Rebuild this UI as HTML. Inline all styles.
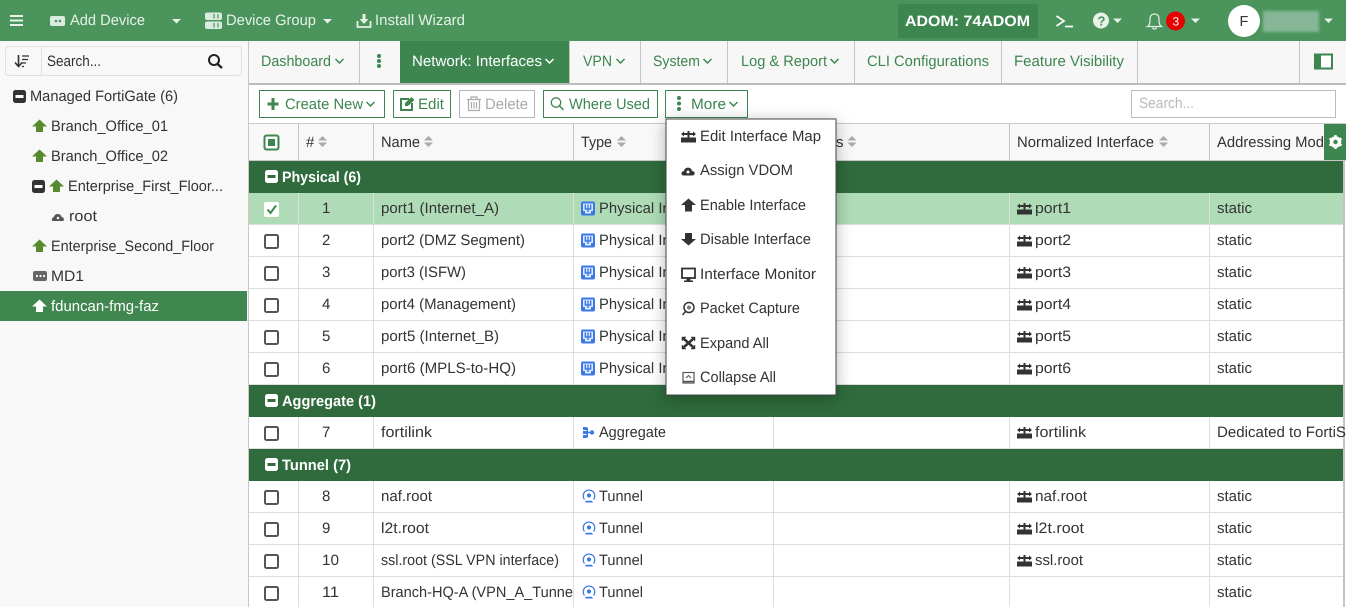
<!DOCTYPE html>
<html><head><meta charset="utf-8"><title>Network: Interfaces</title>
<style>
html,body{margin:0;padding:0;background:#fff;width:1346px;height:607px;overflow:hidden}
svg{display:block;position:absolute;left:0;top:0}
text{font-family:"Liberation Sans",sans-serif;font-size:15px;fill:#333;text-rendering:geometricPrecision}
.w{fill:#fff}.g{fill:#3d8650}.b{font-weight:bold}.m{fill:#4a4a4a}
.l{stroke:#dedede;stroke-width:1}
.h{stroke:#c4c4c4;stroke-width:1}
.c{fill:none;stroke-width:1.5}
</style></head><body>
<svg width="1346" height="607" viewBox="0 0 1346 607" xmlns="http://www.w3.org/2000/svg">
<defs>
<filter id="bl" x="-20%" y="-40%" width="140%" height="180%"><feGaussianBlur stdDeviation="1.2"/></filter>
<g id="up"><path d="M0 7L7.500 0L15 7H11V12.500H4V7Z" fill="#568a2c"/></g>
<g id="upw"><path d="M0 7L7.500 0L15 7H11V12.500H4V7Z" fill="#fff"/></g>
<g id="minus"><rect width="13" height="13" rx="2.500" fill="#333"/><rect x="2.500" y="5" width="8" height="3" fill="#fff"/></g>
<g id="gminus"><rect width="13" height="13" rx="2.500" fill="#fff"/><rect x="2.500" y="5" width="8" height="3" fill="#2f6b3c"/></g>
<g id="pm"><path d="M0 6.500H15V11.500H0Z" fill="#333"/><path d="M0 3L3 .5V2H6.500V0H8.500V2H12V.5L15 3L12 5.500V4H8.500V6.500H6.500V4H3V5.500Z" fill="#333"/></g>
<g id="sort"><path d="M0 4.500L4.500 0L9 4.500ZM0 6.500H9L4.500 11Z" fill="#aaa"/></g>
<g id="cb"><rect x="1" y="1" width="13" height="13" rx="1.500" fill="#fff" stroke="#555" stroke-width="2"/></g>
<g id="ph"><rect width="14" height="14" rx="2" fill="#3b78e7"/><path d="M2 2H12V9.500H10V12H4V9.500H2Z" fill="#dce8fb"/><path d="M4.300 3V7.500H9.700V3M7 3V10.500" fill="none" stroke="#3b78e7" stroke-width="1.400"/></g>
<g id="tu"><path d="M2 9.500A5.800 5.800 0 1 1 11 9.500" fill="none" stroke="#3b78e7" stroke-width="1.200"/><circle cx="6.500" cy="5.500" r="2.100" fill="#3b78e7"/><path d="M3.500 10.800H9.500L10.500 12.500H2.500Z" fill="#3b78e7"/></g>
<path id="dn" d="M0 0H9L4.500 4.500Z"/>
</defs>

<!-- top bar -->
<rect width="1346" height="41" fill="#4b955c"/>
<path d="M10 16H23M10 20.500H23M10 25H23" stroke="#e8f2ea" stroke-width="2"/>
<rect x="50" y="16" width="15" height="10" rx="2" fill="#dcebdf"/><circle cx="56" cy="21" r="1.300" fill="#4b955c"/><circle cx="60" cy="21" r="1.300" fill="#4b955c"/>
<text x="70" y="25" textLength="75" lengthAdjust="spacingAndGlyphs" style="fill:#e6f1e8">Add Device</text>
<use href="#dn" x="172" y="19" fill="#e6f1e8"/>
<rect x="205" y="12.500" width="17" height="7.500" rx="2" fill="#dcebdf"/><rect x="205" y="21.500" width="17" height="7.500" rx="2" fill="#dcebdf"/><path d="M214 14V18.500M218 14V18.500M214 23V27.500M218 23V27.500" stroke="#4b955c" stroke-width="1.200"/>
<text x="226" y="25" textLength="90" lengthAdjust="spacingAndGlyphs" style="fill:#e6f1e8">Device Group</text>
<use href="#dn" x="323" y="19" fill="#e6f1e8"/>
<path d="M362.500 14H365.500V19H368.500L364 24L359.500 19H362.500Z" fill="#e6f1e8"/><path d="M357.500 21V27H370.500V21" fill="none" stroke="#e6f1e8" stroke-width="1.800"/>
<text x="375" y="25" textLength="90" lengthAdjust="spacingAndGlyphs" style="fill:#e6f1e8">Install Wizard</text>
<rect x="898" y="4" width="140" height="34" fill="#3e8650"/>
<text x="905" y="26" textLength="125" lengthAdjust="spacingAndGlyphs" class="w b">ADOM: 74ADOM</text>
<path d="M1056.500 16L1064 21L1056.500 26M1065 26.500H1073" fill="none" stroke="#fff" stroke-width="1.700"/>
<circle cx="1101" cy="20.500" r="8" fill="#e8f2ea"/><text x="1097.500" y="25.500" class="b" style="font-size:13px;fill:#4b955c">?</text>
<use href="#dn" x="1113" y="18.500" fill="#e6f1e8"/>
<path d="M1147.500 26.500C1150 25 1150 22 1150 19C1150 15.500 1152 14 1154.500 14C1157 14 1159 15.500 1159 19C1159 22 1159 25 1161.500 26.500ZM1152.500 27.500C1153 29.500 1156 29.500 1156.500 27.500" fill="none" stroke="#e6f1e8" stroke-width="1.200"/>
<circle cx="1175.500" cy="21" r="9.500" fill="#e60000"/><text x="1172.500" y="25.500" class="w" style="font-size:12px">3</text>
<use href="#dn" x="1191" y="18.500" fill="#e6f1e8"/>
<circle cx="1244" cy="21" r="16" fill="#fff"/><text x="1239.500" y="26" style="font-size:14.500px">F</text>
<rect x="1263" y="11" width="56" height="21" fill="#86b695" filter="url(#bl)"/>
<use href="#dn" x="1324" y="18.500" fill="#e6f1e8"/>

<!-- sidebar -->
<rect y="41" width="248" height="566" fill="#f8f8f8"/>
<rect x="248" y="41" width="1" height="566" fill="#c9c9c9"/>
<rect x="5.500" y="46.500" width="236" height="29" rx="3" fill="#f8f8f8" stroke="#e0e0e0"/>
<path d="M41.500 47V75" stroke="#e0e0e0"/>
<path d="M18.500 55V66M15 62.500L18.500 66.500L22 62.500" fill="none" stroke="#333" stroke-width="1.600"/><path d="M22 56H29M22 59.500H28M22 63H26M22 66.500H24" stroke="#333" stroke-width="1.300"/>
<text x="47" y="66" textLength="54" lengthAdjust="spacingAndGlyphs">Search...</text>
<circle cx="214" cy="60" r="5" fill="none" stroke="#222" stroke-width="2"/><path d="M217.500 64L222 68" stroke="#222" stroke-width="2.400"/>
<use href="#minus" x="13" y="90"/>
<text x="30" y="101" textLength="148" lengthAdjust="spacingAndGlyphs">Managed FortiGate (6)</text>
<use href="#up" x="32" y="119.500"/><text x="51" y="131" textLength="117" lengthAdjust="spacingAndGlyphs">Branch_Office_01</text>
<use href="#up" x="32" y="149.500"/><text x="51" y="161" textLength="117" lengthAdjust="spacingAndGlyphs">Branch_Office_02</text>
<use href="#minus" x="32" y="180"/><use href="#up" x="49" y="179.500"/><text x="68" y="191" textLength="155" lengthAdjust="spacingAndGlyphs">Enterprise_First_Floor...</text>
<path d="M53 221C51 221 52 217 54 217C54.500 213 61 213 61.500 217C64 217 65 221 62.500 221Z" fill="#555"/><circle cx="58" cy="218" r="1.300" fill="#f8f8f8"/>
<text x="69" y="221" textLength="28" lengthAdjust="spacingAndGlyphs">root</text>
<use href="#up" x="32" y="239.500"/><text x="51" y="251" textLength="163" lengthAdjust="spacingAndGlyphs">Enterprise_Second_Floor</text>
<rect x="33" y="271" width="14" height="10" rx="2" fill="#666"/><circle cx="37" cy="276" r="1.100" fill="#fff"/><circle cx="40.500" cy="276" r="1.100" fill="#fff"/><circle cx="44" cy="276" r="1.100" fill="#fff"/>
<text x="51" y="281" textLength="33" lengthAdjust="spacingAndGlyphs">MD1</text>
<rect y="291" width="247" height="30" fill="#3f864f"/>
<use href="#upw" x="32" y="299.500"/><text x="51" y="311" textLength="108" lengthAdjust="spacingAndGlyphs" class="w">fduncan-fmg-faz</text>

<!-- tabs -->
<rect x="249" y="41" width="1097" height="42" fill="#f7f7f7"/>
<rect x="249" y="83" width="1097" height="2" fill="#bcbcbc"/>
<rect x="400" y="41" width="169" height="42" fill="#3d8650"/>
<path class="h" d="M359.500 41V83M569.500 41V83M640.500 41V83M727.500 41V83M854.500 41V83M1001.500 41V83M1137.500 41V83M1299.500 41V83"/>
<text x="261" y="66" textLength="70" lengthAdjust="spacingAndGlyphs" class="g">Dashboard</text>
<path class="c" stroke="#3d8650" d="M335.500 59L339.500 63L343.500 59"/>
<circle cx="379" cy="56" r="2" fill="#3d8650"/><circle cx="379" cy="61" r="2" fill="#3d8650"/><circle cx="379" cy="66" r="2" fill="#3d8650"/>
<text x="412" y="66" textLength="130" lengthAdjust="spacingAndGlyphs" class="w">Network: Interfaces</text>
<path class="c" stroke="#fff" d="M545.500 59L549.500 63L553.500 59"/>
<text x="583" y="66" textLength="29" lengthAdjust="spacingAndGlyphs" class="g">VPN</text>
<path class="c" stroke="#3d8650" d="M616.500 59L620.500 63L624.500 59"/>
<text x="653" y="66" textLength="47" lengthAdjust="spacingAndGlyphs" class="g">System</text>
<path class="c" stroke="#3d8650" d="M703.500 59L707.500 63L711.500 59"/>
<text x="741" y="66" textLength="86" lengthAdjust="spacingAndGlyphs" class="g">Log &amp; Report</text>
<path class="c" stroke="#3d8650" d="M830.500 59L834.500 63L838.500 59"/>
<text x="867" y="66" textLength="122" lengthAdjust="spacingAndGlyphs" class="g">CLI Configurations</text>
<text x="1014" y="66" textLength="110" lengthAdjust="spacingAndGlyphs" class="g">Feature Visibility</text>
<rect x="1315" y="54.500" width="17" height="14" fill="#fff" stroke="#3d8650" stroke-width="2"/><rect x="1315" y="54.500" width="6" height="14" fill="#3d8650"/>

<!-- toolbar -->
<g fill="#fff" stroke="#3d8650" stroke-width="1">
<rect x="259.500" y="90.500" width="125" height="27"/>
<rect x="393.500" y="90.500" width="57" height="27"/>
<rect x="543.500" y="90.500" width="114" height="27"/>
<rect x="665.500" y="90.500" width="82" height="27"/>
</g>
<rect x="459.500" y="90.500" width="75" height="27" fill="#fff" stroke="#b5b5b5"/>
<rect x="1131.500" y="90.500" width="204" height="27" fill="#fff" stroke="#bcbcbc"/>
<path d="M273 98V110M267.500 104H278.500" stroke="#3d8650" stroke-width="3"/>
<text x="285" y="109" textLength="78" lengthAdjust="spacingAndGlyphs" class="g">Create New</text>
<path class="c" stroke="#3d8650" d="M366.500 102L370.500 106L374.500 102"/>
<path d="M409 99H401V110H412V103" fill="none" stroke="#3d8650" stroke-width="2"/><path d="M405 106V103L411.500 97L414.500 100L408 106Z" fill="#3d8650"/>
<text x="418" y="109" textLength="26" lengthAdjust="spacingAndGlyphs" class="g">Edit</text>
<path d="M467 99.500H481M471 99.500V97H477V99.500M468.500 100V110.500H479.500V100M471.500 102V108.500M474 102V108.500M476.500 102V108.500" fill="none" stroke="#aaa" stroke-width="1.200"/>
<text x="485" y="109" textLength="43" lengthAdjust="spacingAndGlyphs" style="fill:#aaa">Delete</text>
<circle cx="556" cy="102.500" r="4.700" fill="none" stroke="#3d8650" stroke-width="1.300"/><path d="M559.500 106L563.500 110" stroke="#3d8650" stroke-width="1.500"/>
<text x="569" y="109" textLength="81" lengthAdjust="spacingAndGlyphs" class="g">Where Used</text>
<circle cx="679" cy="98" r="2" fill="#3d8650"/><circle cx="679" cy="103.500" r="2" fill="#3d8650"/><circle cx="679" cy="109" r="2" fill="#3d8650"/>
<text x="691" y="109" textLength="35" lengthAdjust="spacingAndGlyphs" class="g">More</text>
<path class="c" stroke="#3d8650" d="M729.500 102L733.500 106L737.500 102"/>
<text x="1139" y="108" textLength="55" lengthAdjust="spacingAndGlyphs" style="fill:#bbb">Search...</text>

<!-- table header -->
<rect x="249" y="123" width="1097" height="38" fill="#f8f8f8"/>
<path d="M249 123.500H1346M249 160.500H1346" stroke="#c9c9c9"/>
<path class="h" d="M298.500 124V160M373.500 124V160M573.500 124V160M773.500 124V160M1009.500 124V160M1209.500 124V160"/>
<rect x="264.500" y="135.500" width="14" height="14" rx="2" fill="#fff" stroke="#3d8650" stroke-width="2"/><rect x="268" y="139" width="7" height="7" fill="#3d8650"/>
<text x="306" y="147">#</text><use href="#sort" x="318" y="136"/>
<text x="381" y="147" textLength="39" lengthAdjust="spacingAndGlyphs">Name</text><use href="#sort" x="424" y="136"/>
<text x="581" y="147" textLength="31" lengthAdjust="spacingAndGlyphs">Type</text><use href="#sort" x="617" y="136"/>
<text x="836" y="147">s</text><use href="#sort" x="847.500" y="136"/>
<text x="1017" y="147" textLength="137" lengthAdjust="spacingAndGlyphs">Normalized Interface</text><use href="#sort" x="1159" y="136"/>
<text x="1217" y="147" textLength="107" lengthAdjust="spacingAndGlyphs">Addressing Mod</text>
<rect x="1324" y="124" width="22" height="36" fill="#3d8650"/>
<circle cx="1335.500" cy="142" r="4.300" fill="none" stroke="#fff" stroke-width="3"/>
<path d="M1335.500 135V149M1329.500 138.500L1341.500 145.500M1341.500 138.500L1329.500 145.500" stroke="#fff" stroke-width="2.400"/><circle cx="1335.500" cy="142" r="2.200" fill="#3d8650"/>

<!-- groups -->
<rect x="249" y="161" width="1094" height="32" fill="#2f6b3c"/>
<use href="#gminus" x="265" y="170"/><text x="282" y="182" textLength="79" lengthAdjust="spacingAndGlyphs" class="w b">Physical (6)</text>
<rect x="249" y="385" width="1094" height="32" fill="#2f6b3c"/>
<use href="#gminus" x="265" y="394"/><text x="282" y="406" textLength="94" lengthAdjust="spacingAndGlyphs" class="w b">Aggregate (1)</text>
<rect x="249" y="449" width="1094" height="32" fill="#2f6b3c"/>
<use href="#gminus" x="265" y="458"/><text x="282" y="470" textLength="69" lengthAdjust="spacingAndGlyphs" class="w b">Tunnel (7)</text>

<!-- selected row -->
<rect x="249" y="193" width="1094" height="31" fill="#afdcb7"/>

<!-- grid lines -->
<path class="l" d="M249 224.500H1343M249 256.500H1343M249 288.500H1343M249 320.500H1343M249 352.500H1343M249 384.500H1343M249 448.500H1343M249 512.500H1343M249 544.500H1343M249 576.500H1343"/>
<path class="l" d="M298.500 193V385M373.500 193V385M573.500 193V385M773.500 193V385M1009.500 193V385M1209.500 193V385M298.500 417V449M373.500 417V449M573.500 417V449M773.500 417V449M1009.500 417V449M1209.500 417V449M298.500 481V607M373.500 481V607M573.500 481V607M773.500 481V607M1009.500 481V607M1209.500 481V607"/>
<rect x="1343" y="161" width="2" height="446" fill="#c4c4c4"/>

<!-- rows -->
<rect x="264" y="202" width="15" height="15" rx="2" fill="#fff"/><path d="M267.500 209.500L270.500 213L276 205.500" fill="none" stroke="#3d8650" stroke-width="2"/>
<text x="322" y="213">1</text><text x="381" y="213" textLength="118" lengthAdjust="spacingAndGlyphs">port1 (Internet_A)</text><use href="#ph" x="581" y="201.500"/><text x="599" y="213" textLength="117" lengthAdjust="spacingAndGlyphs">Physical Interface</text><use href="#pm" x="1017" y="203"/><text x="1035" y="213" textLength="36" lengthAdjust="spacingAndGlyphs">port1</text><text x="1217" y="213" textLength="35" lengthAdjust="spacingAndGlyphs">static</text>

<use href="#cb" x="264" y="234"/><text x="322" y="245">2</text><text x="381" y="245" textLength="144" lengthAdjust="spacingAndGlyphs">port2 (DMZ Segment)</text><use href="#ph" x="581" y="233.500"/><text x="599" y="245" textLength="117" lengthAdjust="spacingAndGlyphs">Physical Interface</text><use href="#pm" x="1017" y="235"/><text x="1035" y="245" textLength="36" lengthAdjust="spacingAndGlyphs">port2</text><text x="1217" y="245" textLength="35" lengthAdjust="spacingAndGlyphs">static</text>

<use href="#cb" x="264" y="266"/><text x="322" y="277">3</text><text x="381" y="277" textLength="85" lengthAdjust="spacingAndGlyphs">port3 (ISFW)</text><use href="#ph" x="581" y="265.500"/><text x="599" y="277" textLength="117" lengthAdjust="spacingAndGlyphs">Physical Interface</text><use href="#pm" x="1017" y="267"/><text x="1035" y="277" textLength="36" lengthAdjust="spacingAndGlyphs">port3</text><text x="1217" y="277" textLength="35" lengthAdjust="spacingAndGlyphs">static</text>

<use href="#cb" x="264" y="298"/><text x="322" y="309">4</text><text x="381" y="309" textLength="135" lengthAdjust="spacingAndGlyphs">port4 (Management)</text><use href="#ph" x="581" y="297.500"/><text x="599" y="309" textLength="117" lengthAdjust="spacingAndGlyphs">Physical Interface</text><use href="#pm" x="1017" y="299"/><text x="1035" y="309" textLength="36" lengthAdjust="spacingAndGlyphs">port4</text><text x="1217" y="309" textLength="35" lengthAdjust="spacingAndGlyphs">static</text>

<use href="#cb" x="264" y="330"/><text x="322" y="341">5</text><text x="381" y="341" textLength="118" lengthAdjust="spacingAndGlyphs">port5 (Internet_B)</text><use href="#ph" x="581" y="329.500"/><text x="599" y="341" textLength="117" lengthAdjust="spacingAndGlyphs">Physical Interface</text><use href="#pm" x="1017" y="331"/><text x="1035" y="341" textLength="36" lengthAdjust="spacingAndGlyphs">port5</text><text x="1217" y="341" textLength="35" lengthAdjust="spacingAndGlyphs">static</text>

<use href="#cb" x="264" y="362"/><text x="322" y="373">6</text><text x="381" y="373" textLength="135" lengthAdjust="spacingAndGlyphs">port6 (MPLS-to-HQ)</text><use href="#ph" x="581" y="361.500"/><text x="599" y="373" textLength="117" lengthAdjust="spacingAndGlyphs">Physical Interface</text><use href="#pm" x="1017" y="363"/><text x="1035" y="373" textLength="36" lengthAdjust="spacingAndGlyphs">port6</text><text x="1217" y="373" textLength="35" lengthAdjust="spacingAndGlyphs">static</text>

<use href="#cb" x="264" y="426"/><text x="322" y="437">7</text><text x="381" y="437" textLength="51" lengthAdjust="spacingAndGlyphs">fortilink</text>
<path d="M583 427H586.500V430H583ZM583 431H586.500V434H583ZM583 435H586.500V438H583ZM586.500 427.500H588V437.500H586.500ZM588 431.800H590V433.200H588Z" fill="#3b78e7"/><circle cx="592" cy="432.500" r="2.200" fill="#3b78e7"/>
<text x="599" y="437" textLength="67" lengthAdjust="spacingAndGlyphs">Aggregate</text><use href="#pm" x="1017" y="427"/><text x="1035" y="437" textLength="51" lengthAdjust="spacingAndGlyphs">fortilink</text><text x="1217" y="437" textLength="129" lengthAdjust="spacingAndGlyphs">Dedicated to FortiS</text>

<use href="#cb" x="264" y="490"/><text x="322" y="501">8</text><text x="381" y="501" textLength="51" lengthAdjust="spacingAndGlyphs">naf.root</text><use href="#tu" x="582.500" y="490"/><text x="599" y="501" textLength="44" lengthAdjust="spacingAndGlyphs">Tunnel</text><use href="#pm" x="1017" y="491"/><text x="1035" y="501" textLength="52" lengthAdjust="spacingAndGlyphs">naf.root</text><text x="1217" y="501" textLength="35" lengthAdjust="spacingAndGlyphs">static</text>

<use href="#cb" x="264" y="522"/><text x="322" y="533">9</text><text x="381" y="533" textLength="48" lengthAdjust="spacingAndGlyphs">l2t.root</text><use href="#tu" x="582.500" y="522"/><text x="599" y="533" textLength="44" lengthAdjust="spacingAndGlyphs">Tunnel</text><use href="#pm" x="1017" y="523"/><text x="1035" y="533" textLength="49" lengthAdjust="spacingAndGlyphs">l2t.root</text><text x="1217" y="533" textLength="35" lengthAdjust="spacingAndGlyphs">static</text>

<use href="#cb" x="264" y="554"/><text x="322" y="565" textLength="17" lengthAdjust="spacingAndGlyphs">10</text><text x="381" y="565" textLength="178" lengthAdjust="spacingAndGlyphs">ssl.root (SSL VPN interface)</text><use href="#tu" x="582.500" y="554"/><text x="599" y="565" textLength="44" lengthAdjust="spacingAndGlyphs">Tunnel</text><use href="#pm" x="1017" y="555"/><text x="1035" y="565" textLength="48" lengthAdjust="spacingAndGlyphs">ssl.root</text><text x="1217" y="565" textLength="35" lengthAdjust="spacingAndGlyphs">static</text>

<use href="#cb" x="264" y="586"/><text x="322" y="597" textLength="17" lengthAdjust="spacingAndGlyphs">11</text><text x="381" y="597" textLength="192" lengthAdjust="spacingAndGlyphs">Branch-HQ-A (VPN_A_Tunne</text><use href="#tu" x="582.500" y="586"/><text x="599" y="597" textLength="44" lengthAdjust="spacingAndGlyphs">Tunnel</text><text x="1217" y="597" textLength="35" lengthAdjust="spacingAndGlyphs">static</text>

<!-- menu -->
<rect x="666" y="119" width="170" height="276" fill="#fff" stroke="#444" stroke-width="1" style="filter:drop-shadow(0 3px 8px rgba(0,0,0,.28))"/>
<use href="#pm" x="681" y="131"/>
<text x="700" y="141" textLength="121" lengthAdjust="spacingAndGlyphs">Edit Interface Map</text>
<path d="M683.500 175.500C680.500 175.500 681 171 684 171C684.500 166.500 691.500 166.500 692 171C695.500 171 695.500 175.500 692.500 175.500Z" fill="#333"/><circle cx="688" cy="172" r="1.500" fill="#fff"/>
<text x="700" y="175" textLength="93" lengthAdjust="spacingAndGlyphs">Assign VDOM</text>
<path d="M681 205L688.500 198.500L696 205H692V211.500H685V205Z" fill="#333"/>
<text x="700" y="210" textLength="106" lengthAdjust="spacingAndGlyphs">Enable Interface</text>
<path d="M685 233H692V239H696L688.500 245.500L681 239H685Z" fill="#333"/>
<text x="700" y="244" textLength="111" lengthAdjust="spacingAndGlyphs">Disable Interface</text>
<rect x="682" y="268.500" width="13" height="9.500" fill="#fff" stroke="#333" stroke-width="1.800"/><path d="M686.500 278H690.500V280.500H686.500ZM684 280.500H693V282H684Z" fill="#333"/>
<text x="700" y="279" textLength="116" lengthAdjust="spacingAndGlyphs">Interface Monitor</text>
<circle cx="689" cy="307.500" r="5" fill="#fff" stroke="#333" stroke-width="1.500"/><path d="M685.500 311.500L682.500 315" stroke="#333" stroke-width="1.500"/><circle cx="689" cy="307.500" r="2" fill="#777"/>
<text x="700" y="313" textLength="100" lengthAdjust="spacingAndGlyphs">Packet Capture</text>
<path d="M682 337H686L684.800 338.200L688.500 341.500L692.200 338.200L691 337H695V341L693.800 339.800L690.200 343L693.800 346.200L695 345V349H691L692.200 347.800L688.500 344.500L684.800 347.800L686 349H682V345L683.200 346.200L686.800 343L683.200 339.800L682 341Z" fill="#333" stroke="#333" stroke-width=".5"/>
<text x="700" y="348" textLength="69" lengthAdjust="spacingAndGlyphs">Expand All</text>
<rect x="683" y="372.500" width="11" height="10.500" fill="#fff" stroke="#555" stroke-width="1.200"/><path d="M686 378L688.500 375.500L691 378" fill="none" stroke="#555" stroke-width="1"/><path d="M683 381.500H694" stroke="#555" stroke-width="1.500"/>
<text x="700" y="382" textLength="76" lengthAdjust="spacingAndGlyphs">Collapse All</text>
</svg>
</body></html>
